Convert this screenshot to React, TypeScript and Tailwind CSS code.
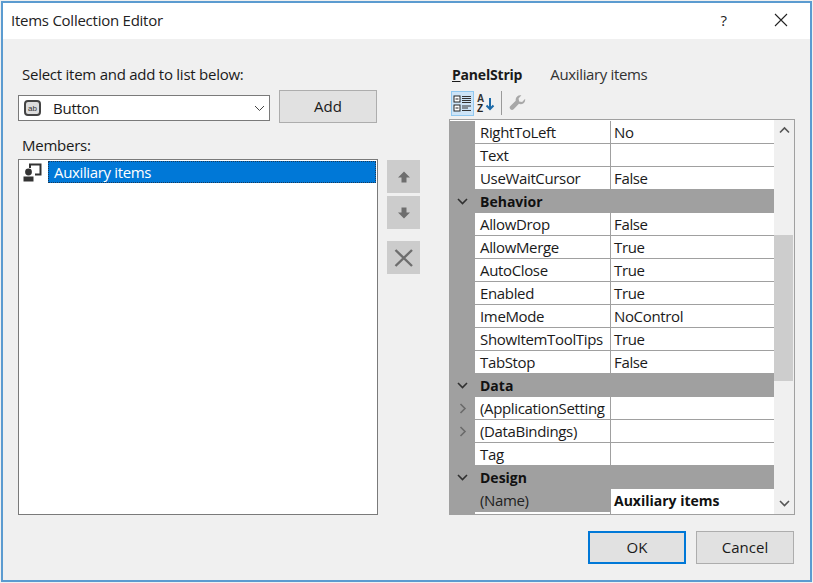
import React from "react";

const font = { fontFamily: '"Open Sans", "Noto Sans", sans-serif' };

type Row =
  | { k: "cat"; name: string }
  | { k: "prop"; name: string; value?: string; exp?: boolean };

const rows: Row[] = [
  { k: "prop", name: "RightToLeft", value: "No" },
  { k: "prop", name: "Text" },
  { k: "prop", name: "UseWaitCursor", value: "False" },
  { k: "cat", name: "Behavior" },
  { k: "prop", name: "AllowDrop", value: "False" },
  { k: "prop", name: "AllowMerge", value: "True" },
  { k: "prop", name: "AutoClose", value: "True" },
  { k: "prop", name: "Enabled", value: "True" },
  { k: "prop", name: "ImeMode", value: "NoControl" },
  { k: "prop", name: "ShowItemToolTips", value: "True" },
  { k: "prop", name: "TabStop", value: "False" },
  { k: "cat", name: "Data" },
  { k: "prop", name: "(ApplicationSetting", exp: true },
  { k: "prop", name: "(DataBindings)", exp: true },
  { k: "prop", name: "Tag" },
  { k: "cat", name: "Design" },
];

function Chev({ dir, color = "#3c3c3c" }: { dir: "up" | "down" | "right"; color?: string }) {
  const d =
    dir === "down" ? "M1 3 L5.5 7.5 L10 3" : dir === "up" ? "M1 7.5 L5.5 3 L10 7.5" : "M3.5 1 L8 5.5 L3.5 10";
  return (
    <svg width="11" height="11" viewBox="0 0 11 11" fill="none">
      <path d={d} stroke={color} strokeWidth="1.6" />
    </svg>
  );
}

function PropRow({ r }: { r: Row }) {
  if (r.k === "cat") {
    return (
      <div className="flex h-[23px] shrink-0 items-center bg-[#a0a0a0]">
        <div className="flex w-[25px] shrink-0 justify-center">
          <Chev dir="down" color="#303030" />
        </div>
        <span className="pl-[5px] text-[14px] leading-none font-bold text-[#111]">{r.name}</span>
      </div>
    );
  }
  return (
    <div className="flex h-[23px] shrink-0 bg-[#a0a0a0]">
      <div className="flex w-[25px] shrink-0 items-center justify-center">
        {r.exp ? <Chev dir="right" color="#6a6a6a" /> : null}
      </div>
      <div className="flex w-[135px] shrink-0 items-center overflow-hidden border-b border-[#a0a0a0] bg-white pl-[5px]">
        <span className="text-[15px] leading-none tracking-[-0.35px] whitespace-nowrap text-[#1a1a1a]">{r.name}</span>
      </div>
      <div className="ml-px flex flex-1 items-center border-b border-[#a0a0a0] bg-white pl-[3px]">
        <span className="text-[15px] leading-none tracking-[-0.35px] text-[#1a1a1a]">{r.value}</span>
      </div>
    </div>
  );
}

function SideButton({ children, className = "" }: { children: React.ReactNode; className?: string }) {
  return (
    <div className={`flex h-[33px] w-[33px] items-center justify-center bg-[#cccccc] ${className}`}>{children}</div>
  );
}

function Button({ label, className = "" }: { label: string; className?: string }) {
  return (
    <div className={`flex items-center justify-center bg-[#e1e1e1] pb-px text-[15px] text-[#1a1a1a] ${className}`}>
      {label}
    </div>
  );
}

export default function App() {
  return (
    <div className="flex h-[583px] w-[813px] flex-col bg-[#f0f0f0] p-px" style={font}>
      <div className="flex flex-1 flex-col border-2 border-[#5b9bd0]">
        {/* Title bar */}
        <div className="flex h-[36px] shrink-0 items-center bg-white pb-[2px] pl-[8px]">
          <span className="text-[15px] tracking-[-0.25px] text-[#222]">Items Collection Editor</span>
          <span className="ml-auto mr-[46px] text-[15px] text-[#222]">?</span>
          <svg width="16" height="16" viewBox="0 0 16 16" className="mr-[21px]" fill="none">
            <path d="M2 2 L14 14 M14 2 L2 14" stroke="#222" strokeWidth="1.1" />
          </svg>
        </div>

        {/* Body */}
        <div className="flex flex-1 flex-col">
          <div className="flex flex-1 pl-[15px] pt-[25px]">
            {/* Left column */}
            <div className="flex w-[360px] shrink-0 flex-col">
              <div className="mb-[6px] pl-[4px] text-[15px] leading-[20px] tracking-[-0.25px] text-[#1a1a1a]">
                Select item and add to list below:
              </div>
              <div className="flex items-start gap-[9px]">
                <div className="mt-[5px] flex h-[26px] w-[252px] items-center border border-[#7a7a7a] bg-white pl-[5px] pr-[3px]">
                  <svg width="17" height="16" viewBox="0 0 17 16" fill="none">
                    <rect x="1" y="1" width="15" height="14" rx="3" fill="#dddddd" stroke="#444" strokeWidth="2" />
                    <text x="8.5" y="11" textAnchor="middle" fontSize="8" fill="#333" style={{ fontFamily: "Liberation Sans" }}>
                      ab
                    </text>
                  </svg>
                  <span className="ml-[12px] text-[15px] tracking-[-0.25px] text-[#1a1a1a]">Button</span>
                  <span className="ml-auto mr-[1px] flex">
                    <svg width="11" height="11" viewBox="0 0 11 11" fill="none">
                      <path d="M1 3 L5.5 7.5 L10 3" stroke="#444" strokeWidth="1" />
                    </svg>
                  </span>
                </div>
                <Button label="Add" className="h-[33px] w-[98px] border border-[#adadad]" />
              </div>

              <div className="mt-[10px] mb-[2px] pl-[4px] text-[15px] leading-[24px] tracking-[-0.25px] text-[#1a1a1a]">
                Members:
              </div>

              <div className="flex h-[356px] w-[360px] flex-col border border-[#7a7a7a] bg-white px-px pt-px">
                <div className="flex h-[22px] items-center">
                  <svg width="19" height="19" viewBox="0 0 19 19" className="ml-[3px]" fill="none">
                    <path d="M7 5 V1.5 H17.5 V11.5 H12" stroke="#333" strokeWidth="2" />
                    <circle cx="5.5" cy="9" r="3.4" fill="#333" />
                    <path d="M0.5 18.5 V13.5 H10.5 V18.5 Z" fill="#333" />
                  </svg>
                  <div className="ml-[6px] flex h-[22px] flex-1 items-center border border-dotted border-[#1a3a5a] bg-[#0078d7] pl-[5px] pt-px">
                    <span className="text-[15px] tracking-[-0.35px] text-white">Auxiliary items</span>
                  </div>
                </div>
              </div>
            </div>

            {/* Move buttons */}
            <div className="ml-[9px] flex w-[33px] shrink-0 flex-col pt-[96px]">
              <SideButton>
                <svg width="14" height="14" viewBox="0 0 14 14">
                  <path d="M7 1.5 L13 7.5 H9.5 V12.5 H4.5 V7.5 H1 Z" fill="#6e6e6e" />
                </svg>
              </SideButton>
              <SideButton className="mt-[3px]">
                <svg width="14" height="14" viewBox="0 0 14 14">
                  <path d="M7 12.5 L13 6.5 H9.5 V1.5 H4.5 V6.5 H1 Z" fill="#6e6e6e" />
                </svg>
              </SideButton>
              <SideButton className="mt-[12px]">
                <svg width="22" height="20" viewBox="0 0 22 20" fill="none">
                  <path d="M2.5 2 L19 18 M19 2 L2.5 18" stroke="#6e6e6e" strokeWidth="2.4" />
                </svg>
              </SideButton>
            </div>

            {/* Right column */}
            <div className="ml-[29px] flex w-[346px] shrink-0 flex-col">
              <div className="mb-[6px] flex h-[20px] items-center pl-[3px] text-[14px] tracking-[-0.2px] text-[#1a1a1a]">
                <span className="font-bold">
                  <span className="underline">P</span>anelStrip
                </span>
                <span className="ml-[28px] text-[15px] tracking-[-0.35px] text-[#333]">Auxiliary items</span>
              </div>

              {/* Toolbar */}
              <div className="flex h-[29px] items-start pl-[2px] pt-px">
                <div className="flex h-[25px] w-[23px] items-center justify-center border border-[#90c8f0] bg-[#cde4f7]">
                  <svg width="19" height="19" viewBox="0 0 19 19" fill="none">
                    <rect x="1" y="2" width="6" height="6" fill="#fff" stroke="#222" />
                    <rect x="1" y="11" width="6" height="6" fill="#fff" stroke="#222" />
                    <path d="M2.5 5 H5.5 M2.5 14 H5.5" stroke="#222" />
                    <path d="M9 2.5 H18 M9 4.5 H18 M9 6.5 H18 M9 8.5 H18 M9 12 H18 M9 14 H15 M9 16.5 H18" stroke="#333" />
                  </svg>
                </div>
                <svg width="20" height="20" viewBox="0 0 20 20" className="ml-[2px] mt-[2px]">
                  <text x="1" y="9" fontSize="10" fontWeight="700" fill="#333" style={{ fontFamily: "Liberation Sans" }}>
                    A
                  </text>
                  <text x="1" y="18.5" fontSize="10" fontWeight="700" fill="#222" style={{ fontFamily: "Liberation Sans" }}>
                    Z
                  </text>
                  <path d="M14 5 V16 M10.5 12.5 L14 16 L17.5 12.5" stroke="#1c6aa8" strokeWidth="2" fill="none" />
                </svg>
                <div className="ml-[5px] h-[24px] w-px bg-[#9a9a9a]" />
                <svg width="17" height="17" viewBox="0 0 24 24" className="ml-[7px] mt-[4px]" fill="#a8a8a8">
                  <path d="M23 6.5a6.5 6.5 0 0 1-9 6L6.5 20a3 3 0 0 1-4.5-4.5L9.5 8A6.5 6.5 0 0 1 17.5 0.5L13.5 5l.8 4.2 4.2.8 4-4.5z" />
                </svg>
              </div>

              {/* Property grid */}
              <div className="flex h-[396px] border border-[#a0a0a0] bg-white">
                <div className="flex w-[324px] shrink-0 flex-col overflow-hidden pt-px">
                  {rows.map((r) => (
                    <PropRow key={r.name} r={r} />
                  ))}
                  <div className="flex h-[23px] shrink-0 bg-[#a0a0a0]">
                    <div className="w-[25px] shrink-0" />
                    <div className="flex w-[135px] shrink-0 items-center bg-[#a0a0a0] pl-[5px]">
                      <span className="text-[15px] leading-none tracking-[-0.35px] text-[#222]">(Name)</span>
                    </div>
                    <div className="ml-px flex flex-1 items-center bg-white pl-[3px]">
                      <span className="text-[14px] leading-none font-bold text-[#111]">Auxiliary items</span>
                    </div>
                  </div>
                  <div className="flex h-[3px] shrink-0 bg-[#a0a0a0]">
                    <div className="w-[25px]" />
                    <div className="w-[135px] bg-white" />
                    <div className="ml-px flex-1 bg-white" />
                  </div>
                </div>
                <div className="flex flex-1 flex-col bg-[#f0f0f0]">
                  <div className="flex h-[21px] items-center justify-center">
                    <Chev dir="up" color="#555" />
                  </div>
                  <div className="mt-[94px] mr-px h-[146px] bg-[#cdcdcd]" />
                  <div className="mt-auto flex h-[21px] items-center justify-center">
                    <Chev dir="down" color="#555" />
                  </div>
                </div>
              </div>
            </div>
          </div>

          {/* Footer */}
          <div className="flex h-[65px] shrink-0 items-start justify-end pr-[16px] pt-[16px]">
            <Button label="OK" className="h-[33px] w-[98px] border-2 border-[#0078d7]" />
            <Button label="Cancel" className="ml-[10px] h-[33px] w-[98px] border border-[#adadad]" />
          </div>
        </div>
      </div>
    </div>
  );
}
